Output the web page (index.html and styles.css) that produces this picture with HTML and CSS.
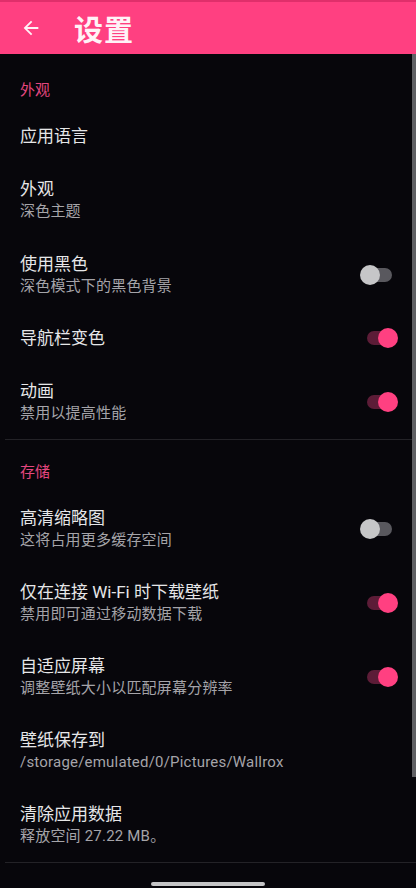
FILE: index.html
```html
<!DOCTYPE html>
<html lang="zh-CN">
<head>
    <meta charset="UTF-8">
    <meta name="viewport" content="width=device-width, initial-scale=1.0">
    <title>设置</title>
    <link rel="stylesheet" href="styles.css">
</head>
<body>
    <header class="appbar">
        <button class="back" aria-label="返回">
            <svg viewBox="0 0 24 24" width="22" height="22"><path d="M20 11H7.83l5.59-5.59L12 4l-8 8 8 8 1.41-1.41L7.83 13H20v-2z" fill="currentColor"/></svg>
        </button>
        <h1>设置</h1>
    </header>

    <main class="settings">
        <section class="group first">
            <h2 class="group-title">外观</h2>
            <div class="pref"><div class="pref-text"><div class="pref-title">应用语言</div></div></div>
            <div class="pref two"><div class="pref-text"><div class="pref-title">外观</div><div class="pref-sum">深色主题</div></div></div>
            <div class="pref two">
                <div class="pref-text"><div class="pref-title">使用黑色</div><div class="pref-sum">深色模式下的黑色背景</div></div>
                <span class="switch"></span>
            </div>
            <div class="pref">
                <div class="pref-text"><div class="pref-title">导航栏变色</div></div>
                <span class="switch on"></span>
            </div>
            <div class="pref two">
                <div class="pref-text"><div class="pref-title">动画</div><div class="pref-sum">禁用以提高性能</div></div>
                <span class="switch on"></span>
            </div>
        </section>

        <hr class="divider">

        <section class="group">
            <h2 class="group-title">存储</h2>
            <div class="pref two">
                <div class="pref-text"><div class="pref-title">高清缩略图</div><div class="pref-sum">这将占用更多缓存空间</div></div>
                <span class="switch"></span>
            </div>
            <div class="pref two">
                <div class="pref-text"><div class="pref-title">仅在连接 Wi-Fi 时下载壁纸</div><div class="pref-sum">禁用即可通过移动数据下载</div></div>
                <span class="switch on"></span>
            </div>
            <div class="pref two">
                <div class="pref-text"><div class="pref-title">自适应屏幕</div><div class="pref-sum">调整壁纸大小以匹配屏幕分辨率</div></div>
                <span class="switch on"></span>
            </div>
            <div class="pref two"><div class="pref-text"><div class="pref-title">壁纸保存到</div><div class="pref-sum">/storage/emulated/0/Pictures/Wallrox</div></div></div>
            <div class="pref two"><div class="pref-text"><div class="pref-title">清除应用数据</div><div class="pref-sum">释放空间 27.22 MB。</div></div></div>
        </section>

        <hr class="divider">

        <div class="scrollbar"></div>
    </main>

    <footer class="navbar"><span class="pill"></span></footer>
</body>
</html>
```

FILE: styles.css
```css
html, body { margin: 0; padding: 0; }
body { background: #07060b; color: #e8e8ea; font-family: Roboto, "Noto Sans CJK SC", sans-serif; width: 416px; height: 888px; overflow: hidden; }

.appbar { height: 52px; border-top: 2px solid #e02f6b; background: #ff4081; display: flex; align-items: center; color: #fff3f7; }
.back { background: none; border: none; padding: 0; margin: 0 0 0 20px; width: 22px; height: 22px; color: #fff3f7; display: flex; }
.appbar h1 { margin: 0 0 0 32px; font-size: 29px; font-weight: 700; letter-spacing: 1px; }

.settings { position: relative; }
.group.first { padding-top: 4px; }
.group-title { margin: 0; padding: 22px 20px 10px; font-size: 15px; line-height: 20px; font-weight: 400; color: #e4467f; }

.pref { display: flex; align-items: center; min-height: 52px; padding: 0 18px 0 20px; }
.pref.two { height: 74px; }
.group.first .pref.two { height: 75px; }
.pref-text { flex: 1; }
.pref-title { font-size: 17px; line-height: 22px; color: #e6e6e8; }
.pref-sum { font-size: 15px; line-height: 22px; color: #a5a4a9; letter-spacing: 0.2px; }

.switch { position: relative; width: 38px; height: 20px; flex: none; }
.switch::before { content: ""; position: absolute; left: 4px; right: 6px; top: 3px; height: 14px; border-radius: 7px; background: #59585e; }
.switch::after { content: ""; position: absolute; left: 0; top: 0; width: 20px; height: 20px; border-radius: 50%; background: #c6c6c8; }
.switch.on::before { background: #5c1c37; left: 7px; right: 3px; }
.switch.on::after { left: auto; right: 0; background: #ff4081; }

.divider { margin: 0 0 0 5px; border: none; height: 1px; background: #232227; }

.scrollbar { position: absolute; top: 0; right: 0; width: 4px; height: 723px; background: #606064; }

.navbar { display: flex; justify-content: center; padding-top: 19px; }
.pill { width: 114px; height: 4px; border-radius: 2px; background: #c4c4c6; }
```
